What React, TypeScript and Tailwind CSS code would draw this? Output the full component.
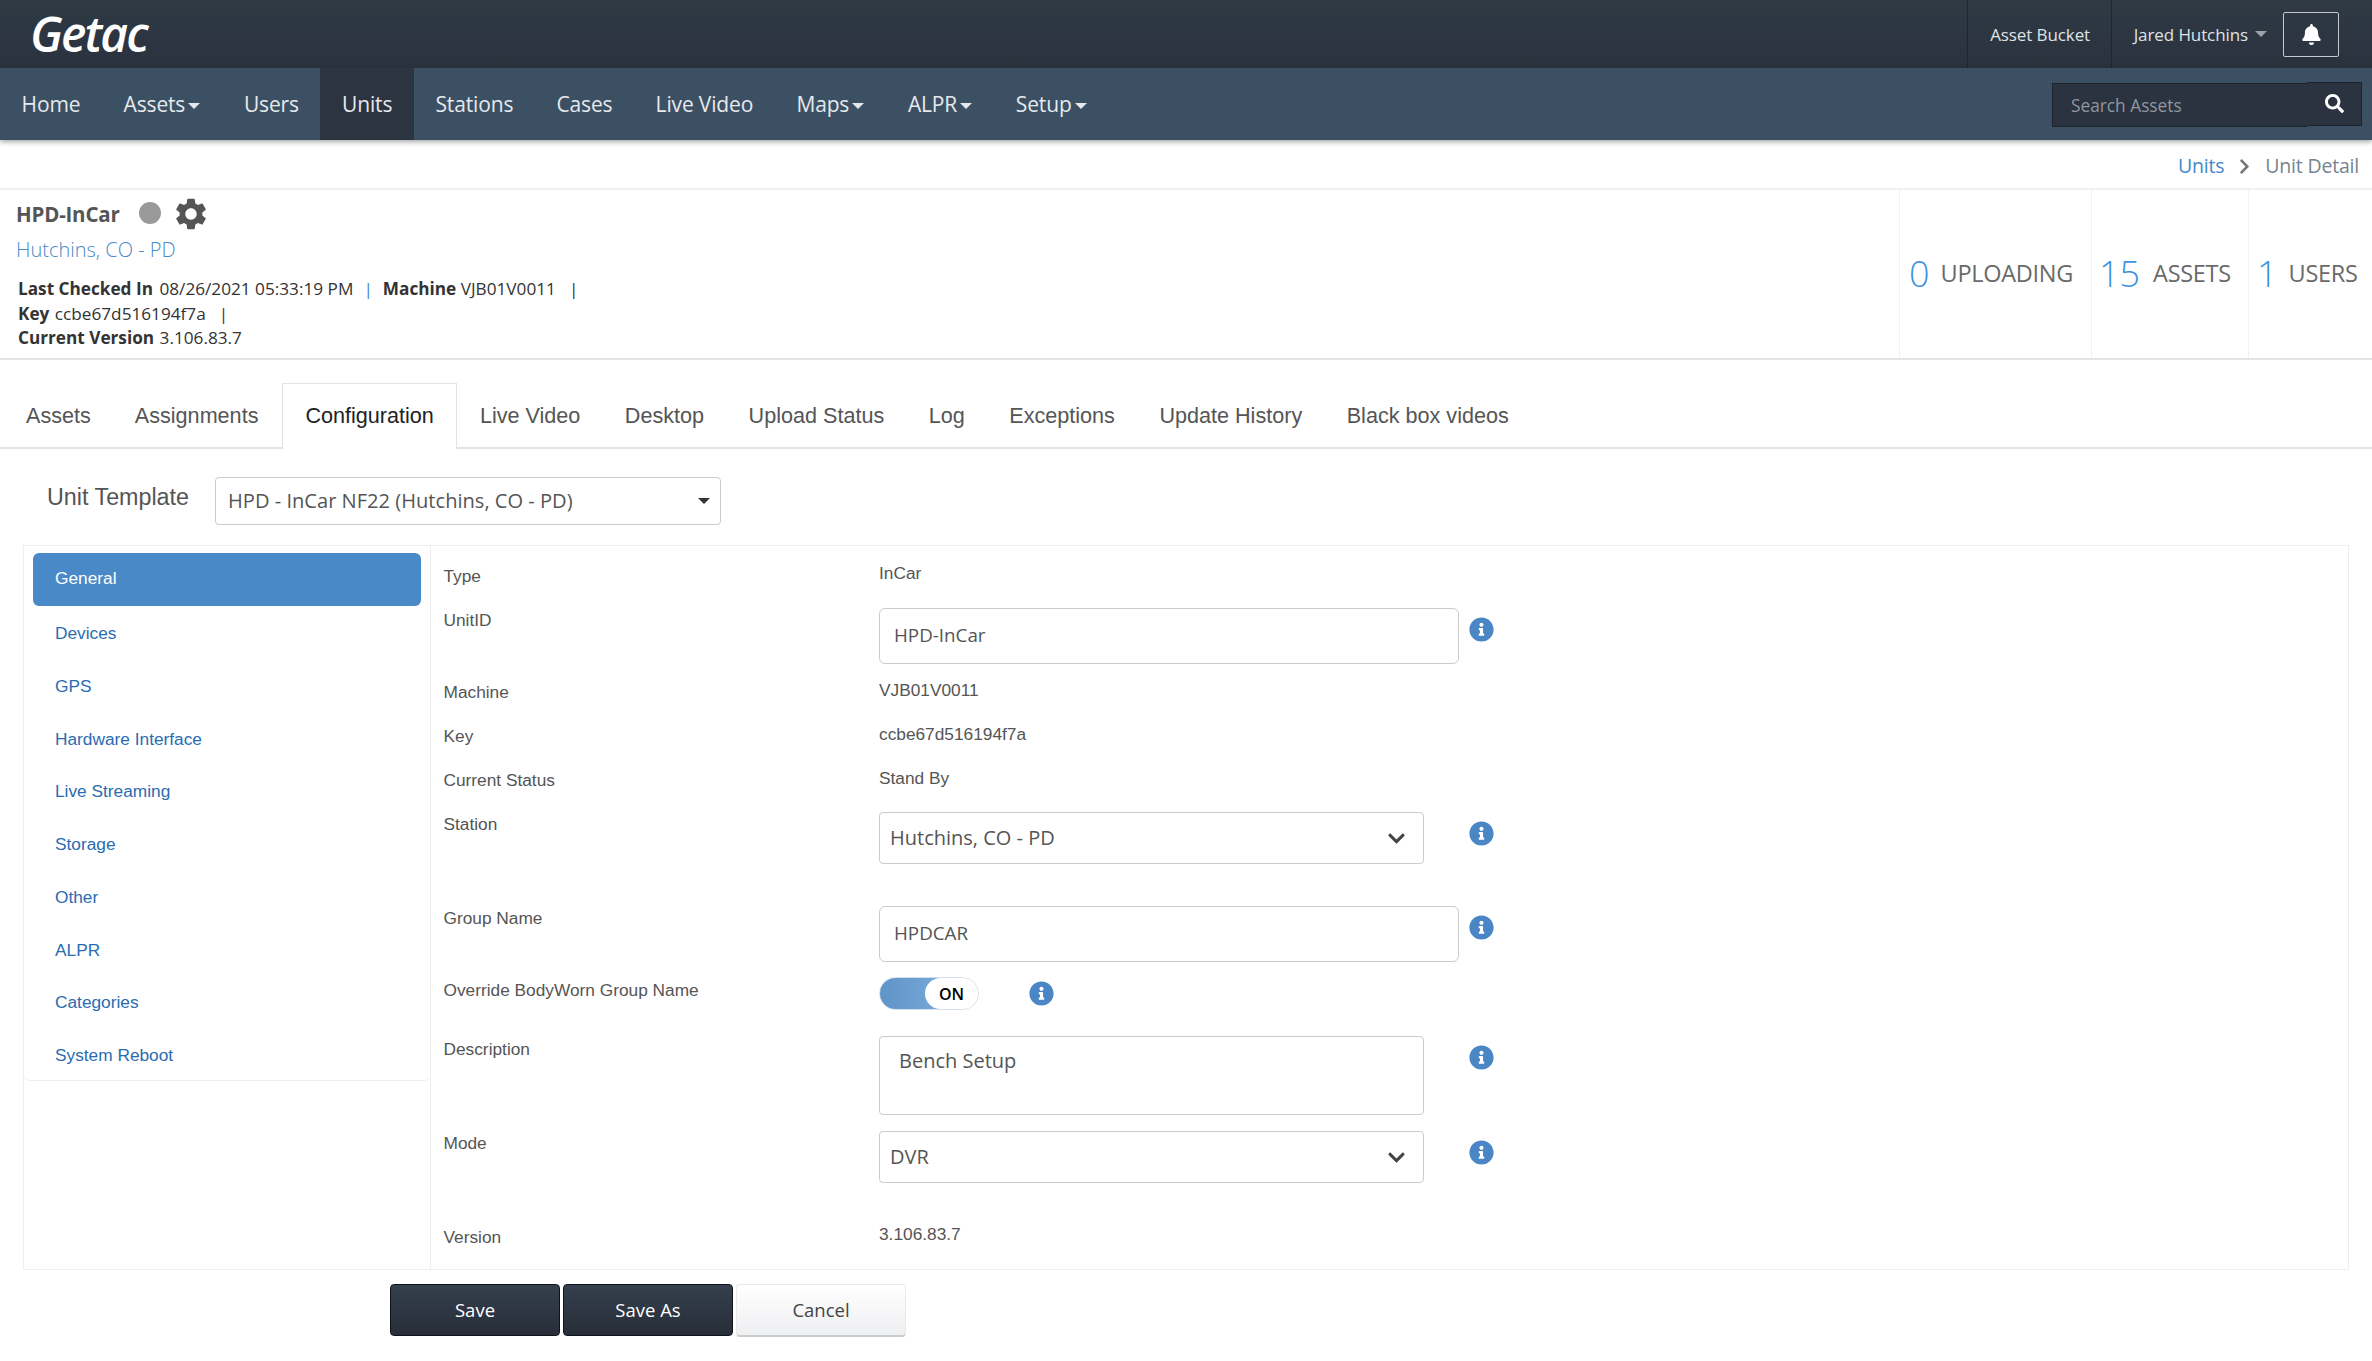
import React from "react";
import { FaBell, FaSearch, FaInfoCircle, FaChevronDown, FaChevronRight } from "react-icons/fa";
import { MdSettings } from "react-icons/md";

const OPEN = "font-['Open_Sans',sans-serif]";
const ARIAL = "font-['Liberation_Sans',Arial,sans-serif]";

function Caret({ className = "" }: { className?: string }) {
  return <span className={`inline-block w-0 h-0 border-x-[6px] border-x-transparent border-t-[6px] border-t-current ${className}`} />;
}

function NavItem({ label, caret, active }: { label: string; caret?: boolean; active?: boolean }) {
  return (
    <div className={`h-full px-[21.6px] pt-[2px] flex items-center text-[21px] tracking-[-0.15px] text-[#e6e9ec] ${active ? "bg-[#2b3440]" : ""}`}>
      <span>{label}</span>
      {caret && <Caret className="ml-[3px] mr-[0.5px] mt-[2px] text-[#e6e9ec]" />}
    </div>
  );
}

function Info({ className = "" }: { className?: string }) {
  return <FaInfoCircle className={`text-[#4a86c5] text-[25px] ${className}`} />;
}

function Stat({ n, label, className, gap }: { n: string; label: string; className: string; gap: string }) {
  return (
    <div className={`h-full border-l border-[#f2f2f2] flex items-center ${className}`}>
      <span className="text-[36px] font-light text-[#3d93e0] leading-none">{n}</span>
      <span className={`text-[23.5px] text-[#6a6a6a] uppercase tracking-[-0.3px] ${gap}`}>{label}</span>
    </div>
  );
}

function Tab({ label, active }: { label: string; active?: boolean }) {
  return (
    <div
      className={
        active
          ? "h-[67px] -mt-[1px] px-[22px] flex items-center bg-white border border-[#e3e3e3] border-b-white text-[#222] relative z-10"
          : "h-[65px] flex items-center text-[#555]"
      }
    >
      {label}
    </div>
  );
}

function SideItem({ label, active }: { label: string; active?: boolean }) {
  return (
    <div
      className={`h-[52.75px] pl-[22px] flex items-center text-[17.3px] ${active ? "bg-[#4a89c7] text-white rounded-[6px] mb-[2px]" : "text-[#2a6cb0]"}`}
    >
      {label}
    </div>
  );
}

function Row({ label, h, top, children }: { label: string; h: number; top: number; children?: React.ReactNode }) {
  return (
    <div className="flex" style={{ height: h }}>
      <div className="w-[448px] pl-[12.5px] text-[17.3px] text-[#555] leading-[22px]" style={{ paddingTop: top }}>
        {label}
      </div>
      <div className="flex-1 min-w-0">{children}</div>
    </div>
  );
}

function Plain({ text, top }: { text: string; top: number }) {
  return <div className="text-[17.3px] text-[#555] leading-[22px]" style={{ paddingTop: top }}>{text}</div>;
}

function TextBox({ value, top }: { value: string; top: number }) {
  return (
    <div className="flex items-start" style={{ paddingTop: top }}>
      <div className={`${OPEN} w-[580px] h-[56px] border border-[#ccc] rounded-[6px] pl-[14px] pb-[2px] flex items-center text-[18.8px] text-[#555]`}>{value}</div>
      <Info className="ml-[10px] mt-[9px]" />
    </div>
  );
}

function SelectBox({ value, top }: { value: string; top: number }) {
  return (
    <div className="flex items-start" style={{ paddingTop: top }}>
      <div className={`${OPEN} w-[545px] h-[52px] border border-[#ccc] rounded-[4px] pl-[10px] pr-[17px] flex items-center justify-between text-[20px] text-[#555]`}>
        <span>{value}</span>
        <FaChevronDown className="text-[19px] text-[#444] mt-[1px]" />
      </div>
      <Info className="ml-[45px] mt-[9px]" />
    </div>
  );
}

function Toggle() {
  return (
    <div className="relative w-[100px] h-[33px] rounded-full border border-[#d5dfea] bg-white overflow-hidden">
      <div className="absolute left-0 top-0 bottom-0 w-[60px] bg-gradient-to-r from-[#5f94c8] to-[#76a8d8]" />
      <div className={`${OPEN} absolute left-[45px] top-0 bottom-0 right-0 bg-white rounded-full flex items-center justify-center text-[16px] font-semibold text-black`}>ON</div>
    </div>
  );
}

export default function App() {
  return (
    <div className={`w-[2372px] h-[1361px] overflow-hidden bg-white ${OPEN}`}>
      {/* top bar */}
      <div className="h-[68px] bg-gradient-to-b from-[#2f3a45] to-[#2a323e] flex items-stretch">
        <div className="pl-[30px] flex items-center text-white text-[48px] italic font-semibold tracking-[-1.9px] leading-none">Getac</div>
        <div className="flex-1" />
        <div className="border-l border-[#1f2630] w-[144px] pl-[2px] pt-[1px] flex items-center justify-center text-[17px] tracking-[-0.1px] text-[#dfe3e6]">Asset Bucket</div>
        <div className="border-l border-[#1f2630] pl-[22px] flex items-center text-[17px] tracking-[-0.1px] text-[#dfe3e6]">
          <span className="pt-[1px]">Jared Hutchins</span>
          <Caret className="ml-[7px] text-[#9aa3ab]" />
          <div className="ml-[16px] w-[56px] h-[45px] border border-[#c5c9cd] rounded-[2px] flex items-center justify-center">
            <FaBell className="text-white text-[21px]" />
          </div>
          <div className="w-[33px]" />
        </div>
      </div>

      {/* nav */}
      <div className="h-[72px] bg-[#3c5064] flex items-center shadow-[0_2px_5px_rgba(0,0,0,0.35)] relative">
        <div className="h-full flex">
          <NavItem label="Home" />
          <NavItem label="Assets" caret />
          <NavItem label="Users" />
          <NavItem label="Units" active />
          <NavItem label="Stations" />
          <NavItem label="Cases" />
          <NavItem label="Live Video" />
          <NavItem label="Maps" caret />
          <NavItem label="ALPR" caret />
          <NavItem label="Setup" caret />
        </div>
        <div className="flex-1" />
        <div className="flex items-center mr-[10px] pt-[1px]">
          <div className="w-[255px] h-[44px] bg-[#2b3340] border border-[#1d232c] border-r-0 flex items-center pl-[18px] pt-[2px] text-[17.3px] text-[#8f979f]">Search Assets</div>
          <div className="w-[55px] h-[44px] -mt-[2px] bg-[#2b3340] border border-[#1d232c] border-l-0 flex items-center justify-center">
            <FaSearch className="text-white text-[19px]" />
          </div>
        </div>
      </div>

      {/* breadcrumb */}
      <div className="h-[50px] pt-[4px] border-b-2 border-[#f0f0f0] flex items-center justify-end pr-[13px] text-[19.5px] tracking-[-0.2px]">
        <span className="text-[#3f87c9]">Units</span>
        <FaChevronRight className="text-[#777] text-[17px] mx-[12px]" />
        <span className="text-[#76838e]">Unit Detail</span>
      </div>

      {/* header */}
      <div className="h-[170px] border-b-2 border-[#e4e4e4] flex">
        <div className="flex-1 pl-[16px]">
          <div className="flex items-center h-[48px]">
            <span className="text-[20.5px] font-bold text-[#555] tracking-[-0.2px]">HPD-InCar</span>
            <span className="ml-[19.5px] w-[22px] h-[22px] rounded-full bg-[#999] -mt-[3px]" />
            <MdSettings className="ml-[11px] text-[38px] text-[#555]" />
          </div>
          <div className="text-[20px] text-[#4a8ac6] font-light leading-[26px] -mt-[1px]">Hutchins, CO - PD</div>
          <div className="text-[17.2px] text-[#333] leading-[24.6px] pl-[2px] mt-[14px]">
            <div><b className="font-bold mr-[2px]">Last Checked In</b> 08/26/2021 05:33:19 PM<span className="mx-[10px] text-[#3f87c9]">|</span><b className="font-bold">Machine</b> VJB01V0011<span className="ml-[13px]">|</span></div>
            <div><b className="font-bold mr-[1px]">Key</b> ccbe67d516194f7a<span className="ml-[13px]">|</span></div>
            <div><b className="font-bold mr-[1px]">Current Version</b> 3.106.83.7</div>
          </div>
        </div>
        <Stat n="0" label="Uploading" className="w-[192px] pl-[9px]" gap="ml-[11px]" />
        <Stat n="15" label="Assets" className="w-[157px] pl-[7px]" gap="ml-[13px]" />
        <Stat n="1" label="Users" className="w-[124px] pl-[8px]" gap="ml-[11px]" />
      </div>

      {/* tabs */}
      <div className={`${ARIAL} mt-[24px] h-[65px] border-b-2 border-[#e4e4e4] flex items-start pl-[26px] text-[21.6px]`}>
        <div className="mr-[44px]"><Tab label="Assets" /></div>
        <div className="mr-[24px]"><Tab label="Assignments" /></div>
        <div className="mr-[23px]"><Tab label="Configuration" active /></div>
        <div className="mr-[44.5px]"><Tab label="Live Video" /></div>
        <div className="mr-[44.5px]"><Tab label="Desktop" /></div>
        <div className="mr-[44.5px]"><Tab label="Upload Status" /></div>
        <div className="mr-[44.5px]"><Tab label="Log" /></div>
        <div className="mr-[44.5px]"><Tab label="Exceptions" /></div>
        <div className="mr-[44.5px]"><Tab label="Update History" /></div>
        <div><Tab label="Black box videos" /></div>
      </div>

      {/* template */}
      <div className="flex items-center h-[48px] mt-[28px] pl-[47px]">
        <span className={`${ARIAL} text-[23.3px] text-[#555] w-[168px] -mt-[8px]`}>Unit Template</span>
        <div className="w-[506px] h-[48px] border border-[#ccc] rounded-[4px] pl-[12px] pr-[10px] flex items-center justify-between text-[20.1px] text-[#555]">
          <span>HPD - InCar NF22 (Hutchins, CO - PD)</span>
          <Caret className="text-[#333]" />
        </div>
      </div>

      {/* panel */}
      <div className={`${ARIAL} ml-[23px] w-[2326px] h-[725px] mt-[20px] border border-[#eee] flex`}>
        <div className="w-[407px] border-r border-[#eee] h-full shrink-0">
          <div className="h-[535px] border-b border-[#eee] rounded-b-[6px] pt-[7px] px-[9px]">
            <SideItem label="General" active />
            <SideItem label="Devices" />
            <SideItem label="GPS" />
            <SideItem label="Hardware Interface" />
            <SideItem label="Live Streaming" />
            <SideItem label="Storage" />
            <SideItem label="Other" />
            <SideItem label="ALPR" />
            <SideItem label="Categories" />
            <SideItem label="System Reboot" />
          </div>
        </div>
        <div className="flex-1 pt-[6px]">
          <Row label="Type" h={48} top={13}><Plain text="InCar" top={10} /></Row>
          <Row label="UnitID" h={71} top={9}><TextBox value="HPD-InCar" top={8} /></Row>
          <Row label="Machine" h={44} top={10}><Plain text="VJB01V0011" top={8} /></Row>
          <Row label="Key" h={44} top={10}><Plain text="ccbe67d516194f7a" top={8} /></Row>
          <Row label="Current Status" h={44} top={10}><Plain text="Stand By" top={8} /></Row>
          <Row label="Station" h={94} top={10}><SelectBox value="Hutchins, CO - PD" top={9} /></Row>
          <Row label="Group Name" h={73} top={10}><TextBox value="HPDCAR" top={9} /></Row>
          <Row label="Override BodyWorn Group Name" h={58} top={9}>
            <div className="flex items-center pt-[7px]">
              <Toggle />
              <Info className="ml-[50px]" />
            </div>
          </Row>
          <Row label="Description" h={95} top={10}>
            <div className="flex items-start pt-[8px]">
              <div className={`${OPEN} w-[545px] h-[79px] border border-[#ccc] rounded-[4px] pl-[19px] pt-[10px] text-[20px] leading-[28px] text-[#555]`}>Bench Setup</div>
              <Info className="ml-[45px] mt-[9px]" />
            </div>
          </Row>
          <Row label="Mode" h={92} top={9}><SelectBox value="DVR" top={8} /></Row>
          <Row label="Version" h={54} top={11}><Plain text="3.106.83.7" top={8} /></Row>
        </div>
      </div>

      {/* actions */}
      <div className={`${OPEN} flex items-start gap-[3px] pl-[390px] mt-[14px] text-[18.5px]`}>
        <div className="w-[170px] h-[52px] rounded-[4px] border border-[#0f1217] bg-gradient-to-b from-[#353f4d] to-[#272e39] text-white flex items-center justify-center">Save</div>
        <div className="w-[170px] h-[52px] rounded-[4px] border border-[#0f1217] bg-gradient-to-b from-[#353f4d] to-[#272e39] text-white flex items-center justify-center">Save As</div>
        <div className="w-[170px] h-[53px] rounded-[4px] border border-[#eaeaea] border-b-[#ccc] border-b-2 bg-gradient-to-b from-white to-[#eeeff1] text-[#444] flex items-center justify-center">Cancel</div>
      </div>
    </div>
  );
}
